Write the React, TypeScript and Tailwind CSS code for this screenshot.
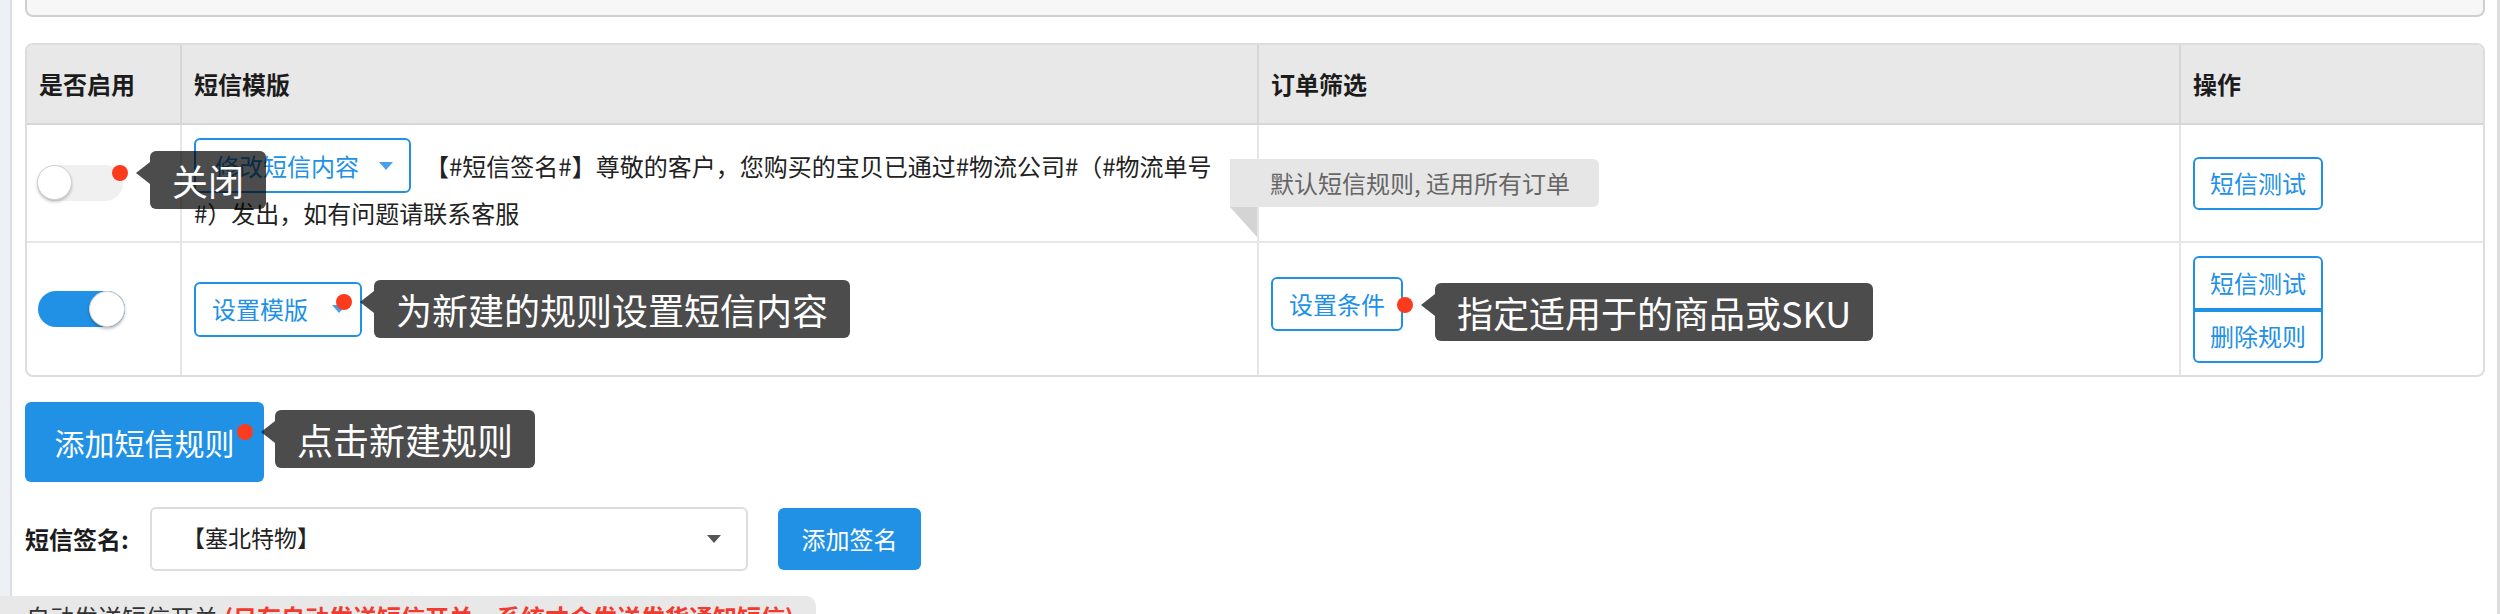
import React from "react";

function Tip({ text, pos }: { text: string; pos: string }) {
  return (
    <div className={`absolute z-20 flex items-start ${pos}`}>
      <span className="mt-[14px] w-[16px] h-[16px] rounded-full bg-[#fb3b1d] shrink-0" />
      <span className="ml-[8px] mt-[11px] w-0 h-0 border-y-[11px] border-y-transparent border-r-[14px] border-r-[rgba(0,0,0,0.7)] shrink-0" />
      <span className="h-[58px] px-[22px] rounded-[6px] bg-[rgba(0,0,0,0.7)] text-white text-[36px] leading-[58px] whitespace-nowrap">
        {text}
      </span>
    </div>
  );
}

function Toggle({ on }: { on: boolean }) {
  return on ? (
    <div className="flex justify-end w-[87px] h-[36px] rounded-full bg-[#2191e6]">
      <div className="w-[36px] h-[36px] rounded-full bg-white border border-[#d4d4d4] shadow-[0_2px_3px_rgba(0,0,0,0.25)]" />
    </div>
  ) : (
    <div className="flex justify-start w-[86px] h-[36px] rounded-full bg-[#f0f0f0]">
      <div className="w-[35px] h-[35px] rounded-full bg-white border border-[#d0d0d0] shadow-[0_2px_3px_rgba(0,0,0,0.22)]" />
    </div>
  );
}

function BlueCaret() {
  return <span className="w-0 h-0 border-x-[7px] border-x-transparent border-t-[8px] border-t-[#4aa0e8]" />;
}

export default function App() {
  return (
    <div className="w-[2500px] h-[614px] flex bg-white overflow-hidden font-['Noto_Sans_CJK_SC','Noto_Sans',sans-serif] text-[#222]">
      <div className="flex-1 flex flex-col">
        <div className="h-[596px] flex shrink-0">
          <div className="w-[12px] bg-[#edf0f4] border-r-2 border-[#d8dde3]" />
          <div className="flex-1 pl-[13px] pr-[12px] flex flex-col">
            {/* top box */}
            <div className="h-[17px] border-2 border-t-0 border-[#cfcfcf] rounded-b-[8px] bg-[#f7f7f7]" />

            {/* table */}
            <div className="mt-[26px] border-2 border-[#dddddd] rounded-[8px]">
              <div className="grid grid-cols-[153px_1077px_922px_304px] h-[80px] bg-[#e8e8e8] border-b-2 border-[#d6d6d6] rounded-t-[6px] text-[24px] font-bold text-[#1c1c1c]">
                <div className="flex items-center px-[12px]">是否启用</div>
                <div className="flex items-center px-[12px] border-l-2 border-[#d6d6d6]">短信模版</div>
                <div className="flex items-center px-[12px] border-l-2 border-[#d6d6d6]">订单筛选</div>
                <div className="flex items-center px-[12px] border-l-2 border-[#d6d6d6]">操作</div>
              </div>

              {/* row 1 */}
              <div className="grid grid-cols-[153px_1077px_922px_304px] h-[118px] border-b-2 border-[#e6e6e6] text-[24px]">
                <div className="flex items-center px-[10px]">
                  <div className="relative">
                    <Toggle on={false} />
                    <Tip text="关闭" pos="left-[75px] top-[-14px]" />
                  </div>
                </div>
                <div className="flex flex-col items-start pt-[13px] px-[12px] border-l-2 border-[#e6e6e6]">
                  <div className="flex items-center h-[55px]">
                    <div className="flex items-center h-[55px] w-[217px] pl-[19px] pr-[16px] border-2 border-[#2191e6] rounded-[6px] text-[#2191e6]">
                      <span className="flex-1">修改短信内容</span>
                      <BlueCaret />
                    </div>
                    <span className="ml-[14px] whitespace-nowrap">
                      【#短信签名#】尊敬的客户，您购买的宝贝已通过#物流公司#（#物流单号
                    </span>
                  </div>
                  <div className="mt-[2px] leading-[36px] whitespace-nowrap">#）发出，如有问题请联系客服</div>
                </div>
                <div className="relative flex items-center px-[12px] border-l-2 border-[#e6e6e6]">
                  <div className="relative z-10 -ml-[41px] h-[48px] pl-[40px] pr-[29px] flex items-center bg-[#e6e6e6] rounded-r-[6px] text-[#666] whitespace-nowrap">
                    默认短信规则, 适用所有订单
                    <span className="absolute left-0 top-full w-0 h-0 border-t-[30px] border-t-[#d4d4d4] border-l-[27px] border-l-transparent" />
                  </div>
                </div>
                <div className="flex items-center px-[12px] border-l-2 border-[#e6e6e6]">
                  <div className="flex items-center justify-center w-[130px] h-[53px] border-2 border-[#2191e6] rounded-[6px] text-[#2191e6]">
                    短信测试
                  </div>
                </div>
              </div>

              {/* row 2 */}
              <div className="grid grid-cols-[153px_1077px_922px_304px] h-[132px] text-[24px]">
                <div className="flex items-center px-[11px]">
                  <Toggle on={true} />
                </div>
                <div className="flex items-center px-[12px] border-l-2 border-[#e6e6e6]">
                  <div className="relative flex items-center h-[55px] w-[168px] pl-[16px] pr-[14px] border-2 border-[#2191e6] rounded-[6px] text-[#2191e6]">
                    <span className="flex-1">设置模版</span>
                    <BlueCaret />
                    <Tip text="为新建的规则设置短信内容" pos="left-[140px] top-[-4px]" />
                  </div>
                </div>
                <div className="flex items-center px-[12px] border-l-2 border-[#e6e6e6]">
                  <div className="relative flex items-center justify-center h-[54px] w-[132px] border-2 border-[#2191e6] rounded-[6px] text-[#2191e6] -mt-[10px]">
                    设置条件
                    <Tip text="指定适用于的商品或SKU" pos="left-[124px] top-[4px]" />
                  </div>
                </div>
                <div className="flex items-center px-[12px] border-l-2 border-[#e6e6e6]">
                  <div className="flex flex-col w-[130px] text-[#2191e6]">
                    <div className="flex items-center justify-center h-[54px] border-2 border-[#2191e6] rounded-t-[6px]">短信测试</div>
                    <div className="flex items-center justify-center h-[53px] border-2 border-[#2191e6] rounded-b-[6px]">删除规则</div>
                  </div>
                </div>
              </div>
            </div>

            {/* add rule */}
            <div className="mt-[25px] flex">
              <div className="relative flex items-center justify-center w-[239px] h-[80px] rounded-[6px] bg-[#2191e6] text-white text-[30px]">
                添加短信规则
                <Tip text="点击新建规则" pos="left-[212px] top-[8px]" />
              </div>
            </div>

            {/* signature */}
            <div className="mt-[25px] flex items-center h-[64px]">
              <span className="w-[125px] text-[24px] font-bold text-[#1c1c1c]">短信签名:</span>
              <div className="flex items-center w-[598px] h-[64px] border-2 border-[#dddddd] rounded-[6px] pl-[30px] pr-[25px] text-[23px] text-[#222]">
                <span className="flex-1 -mt-[4px]">【塞北特物】</span>
                <span className="w-0 h-0 border-x-[7px] border-x-transparent border-t-[8px] border-t-[#555]" />
              </div>
              <div className="ml-[30px] flex items-center justify-center w-[143px] h-[62px] rounded-[6px] bg-[#2191e6] text-white text-[24px]">
                添加签名
              </div>
            </div>
          </div>
        </div>

        {/* bottom bar */}
        <div className="w-[816px] h-[18px] bg-[#e8e8e8] rounded-tr-[10px] pl-[26px] pt-[3px] text-[24px] leading-[36px] whitespace-nowrap overflow-hidden">
          <span className="text-[#333]">自动发送短信开关</span>
          <span className="ml-[6px] text-[#f23a2f] font-bold">(只有自动发送短信开关，系统才会发送发货通知短信)</span>
        </div>
      </div>
      <div className="w-[3px] bg-[#dcdcdc]" />
    </div>
  );
}
